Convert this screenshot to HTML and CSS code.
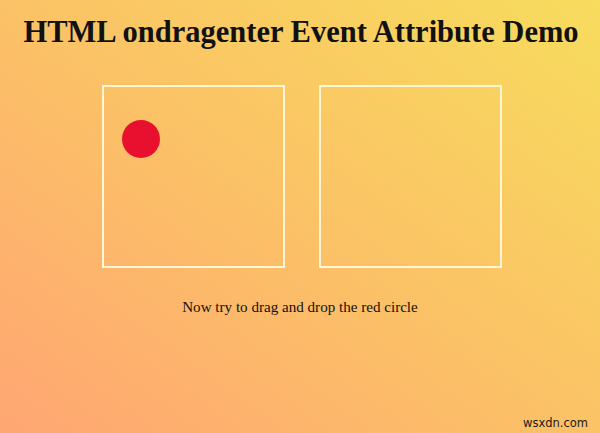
FILE: index.html
```html
<!DOCTYPE html>
<html>
<head>
<meta charset="utf-8">
<link rel="stylesheet" href="styles.css">
</head>
<body>
<h1 class="title">HTML ondragenter Event Attribute Demo</h1>
<div class="boxes">
  <div class="box"><div class="circle"></div></div>
  <div class="box"></div>
</div>
<p class="note">Now try to drag and drop the red circle</p>
<div class="mark">wsxdn.com</div>
</body>
</html>
```
FILE: styles.css
```css
html, body {
  margin: 0;
  height: 100%;
}
body {
  width: 600px;
  height: 433px;
  overflow: hidden;
  position: relative;
  background: linear-gradient(to top right, #ffa673, #fbc266 50%, #f7dc5d);
  font-family: "Liberation Serif", "Times New Roman", serif;
  color: #111;
}
.title {
  margin: 0;
  padding: 15px 0 0 2px;
  font-size: 30.5px;
  font-weight: bold;
  text-align: center;
  line-height: 34px;
}
.boxes {
  display: flex;
  justify-content: center;
  gap: 34px;
  margin-top: 36px;
  padding-left: 4px;
}
.box {
  border: 2px solid #fff6d8;
  padding: 33px 0 0 18px;
  box-sizing: border-box;
  width: 183px;
  height: 183px;
}
.circle {
  width: 38px;
  height: 38px;
  border-radius: 50%;
  background: #e8102e;
}
.note {
  margin: 30px 0 0;
  text-align: center;
  font-size: 15.1px;
  line-height: 18px;
}
.mark {
  position: absolute;
  right: 12px;
  bottom: 3px;
  font-family: "DejaVu Sans", sans-serif;
  font-size: 11.5px;
  color: #1a1a1a;
}
```
